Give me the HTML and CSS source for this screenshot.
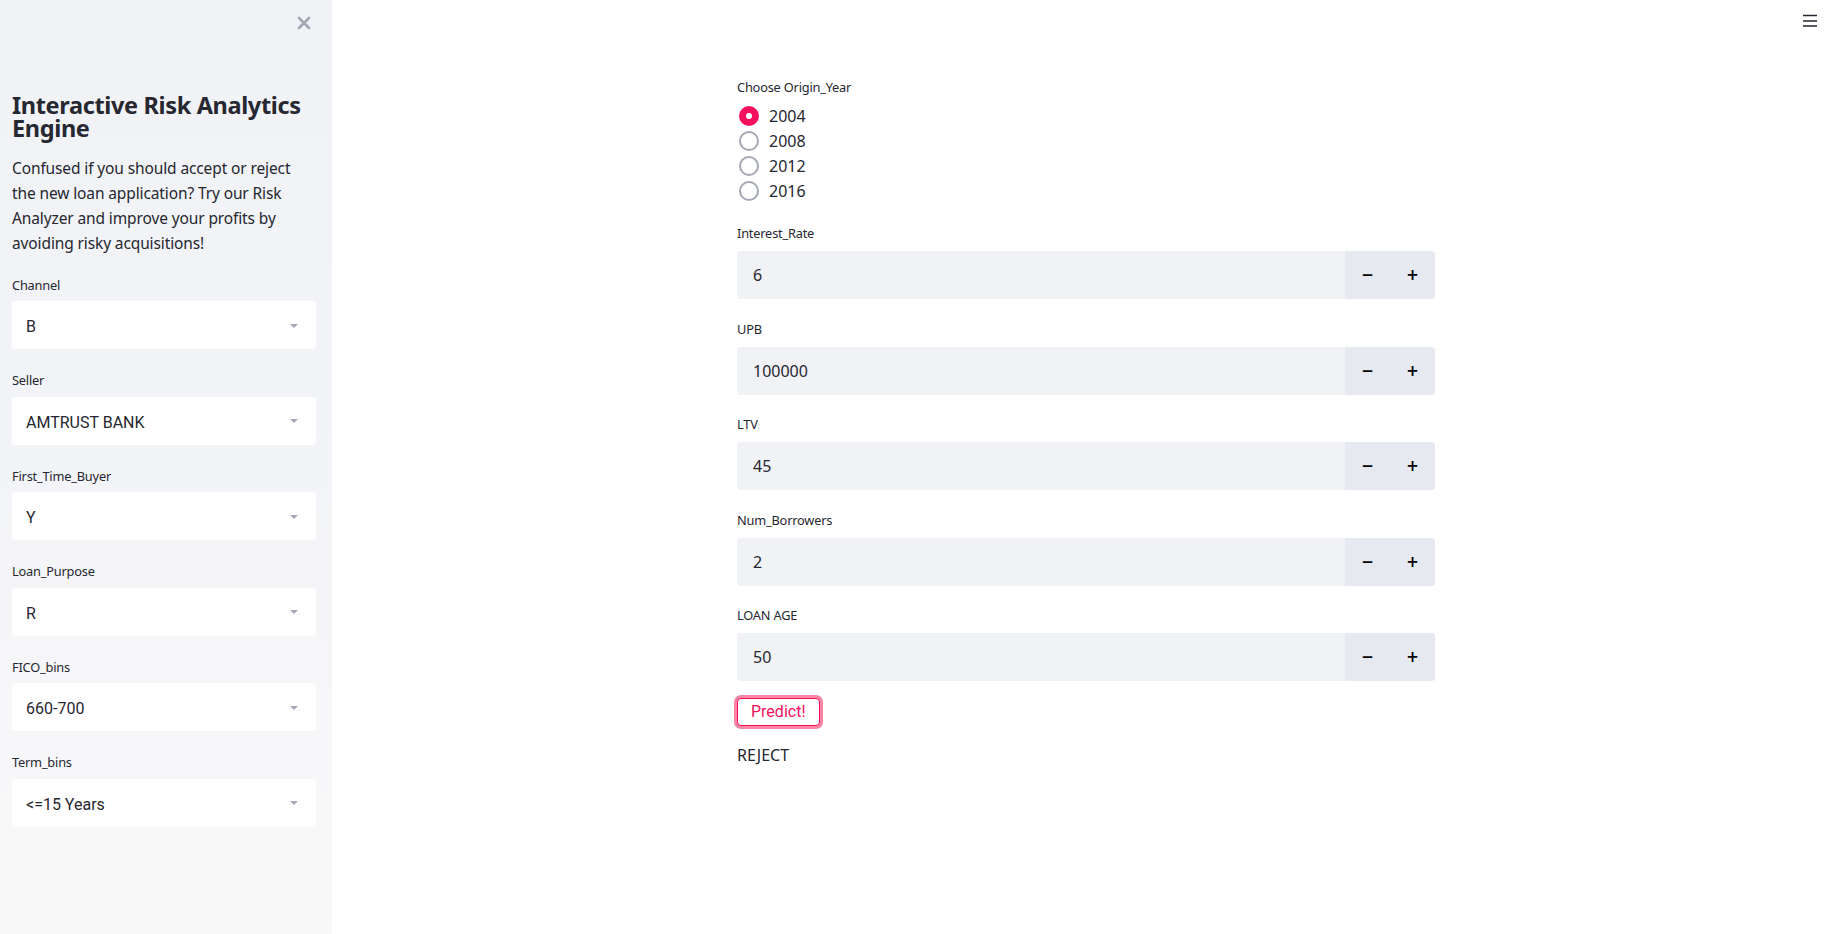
FILE: index.html
```html
<!DOCTYPE html>
<html lang="en">
<head>
<meta charset="utf-8">
<title>Interactive Risk Analytics Engine</title>
<link rel="stylesheet" href="styles.css">
</head>
<body>
<div class="app">
  <aside class="sidebar">
    <div class="sb-top">
      <svg class="close" width="14" height="14" viewBox="0 0 14 14"><path d="M2 2 L12 12 M12 2 L2 12" stroke="#a3a8b4" stroke-width="2.8" stroke-linecap="round"/></svg>
    </div>
    <h1 class="sb-title">Interactive Risk Analytics Engine</h1>
    <p class="sb-text">Confused if you should accept or reject the new loan application? Try our Risk Analyzer and improve your profits by avoiding risky acquisitions!</p>

    <div class="widget sb-widget">
      <div class="label">Channel</div>
      <div class="select"><span class="sel-val">B</span><span class="caret"></span></div>
    </div>
    <div class="widget sb-widget">
      <div class="label">Seller</div>
      <div class="select"><span class="sel-val">AMTRUST BANK</span><span class="caret"></span></div>
    </div>
    <div class="widget sb-widget">
      <div class="label">First_Time_Buyer</div>
      <div class="select"><span class="sel-val">Y</span><span class="caret"></span></div>
    </div>
    <div class="widget sb-widget">
      <div class="label">Loan_Purpose</div>
      <div class="select"><span class="sel-val">R</span><span class="caret"></span></div>
    </div>
    <div class="widget sb-widget">
      <div class="label">FICO_bins</div>
      <div class="select"><span class="sel-val">660-700</span><span class="caret"></span></div>
    </div>
    <div class="widget sb-widget">
      <div class="label">Term_bins</div>
      <div class="select"><span class="sel-val">&lt;=15 Years</span><span class="caret"></span></div>
    </div>
  </aside>

  <main class="main">
    <button class="menu" aria-label="menu">
      <svg width="16" height="14" viewBox="0 0 16 14"><path d="M1 2.5 H15 M1 8 H15 M1 13 H15" stroke="#262730" stroke-width="1.6"/></svg>
    </button>
    <div class="block">
      <div class="radio-widget">
        <div class="label">Choose Origin_Year</div>
        <div class="radios">
          <div class="radio-row"><span class="radio checked"></span><span>2004</span></div>
          <div class="radio-row"><span class="radio"></span><span>2008</span></div>
          <div class="radio-row"><span class="radio"></span><span>2012</span></div>
          <div class="radio-row"><span class="radio"></span><span>2016</span></div>
        </div>
      </div>

      <div class="widget num-widget">
        <div class="label">Interest_Rate</div>
        <div class="num"><span class="num-val">6</span><span class="step">&#8722;</span><span class="step plus">+</span></div>
      </div>
      <div class="widget num-widget">
        <div class="label">UPB</div>
        <div class="num"><span class="num-val">100000</span><span class="step">&#8722;</span><span class="step plus">+</span></div>
      </div>
      <div class="widget num-widget">
        <div class="label">LTV</div>
        <div class="num"><span class="num-val">45</span><span class="step">&#8722;</span><span class="step plus">+</span></div>
      </div>
      <div class="widget num-widget">
        <div class="label">Num_Borrowers</div>
        <div class="num"><span class="num-val">2</span><span class="step">&#8722;</span><span class="step plus">+</span></div>
      </div>
      <div class="widget num-widget">
        <div class="label">LOAN AGE</div>
        <div class="num"><span class="num-val">50</span><span class="step">&#8722;</span><span class="step plus">+</span></div>
      </div>

      <button class="btn">Predict!</button>
      <p class="result">REJECT</p>
    </div>
  </main>
</div>
</body>
</html>
```

FILE: styles.css
```css
* { box-sizing: border-box; }
html, body { margin: 0; padding: 0; }
body {
  font-family: "Noto Sans", "DejaVu Sans", sans-serif;
  color: #262730;
  background: #ffffff;
  width: 1835px;
  height: 934px;
  overflow: hidden;
}
.app {
  display: flex;
  height: 934px;
}
.sidebar {
  width: 332px;
  flex: 0 0 332px;
  height: 934px;
  padding: 0 16px 0 12px;
  background: linear-gradient(180deg, #f0f2f6 0%, #f3f4f7 50%, #f9f9fa 100%);
}
.sb-top {
  height: 46px;
  display: flex;
  justify-content: flex-end;
  align-items: center;
  padding-right: 5px;
}
.close { display: block; }
.sb-title {
  margin: 48px 0 0 0;
  font-size: 23.5px;
  line-height: 23px;
  font-weight: 700;
  letter-spacing: -0.35px;
}
.sb-text {
  margin: 16px 0 0 0;
  font-size: 15.5px;
  line-height: 25px;
  letter-spacing: -0.12px;
}
.label {
  font-size: 12.8px;
  line-height: 16px;
  height: 16px;
  letter-spacing: -0.2px;
}
.widget .label { margin-bottom: 8.5px; }
.sb-widget { margin-top: 23px; }
.sb-text + .sb-widget { margin-top: 20.5px; }
.select {
  height: 48px;
  background: #ffffff;
  border-radius: 4px;
  display: flex;
  align-items: center;
  padding: 3px 18px 0 14px;
}
.sel-val {
  flex: 1;
  font-family: Roboto, "Liberation Sans", sans-serif;
  font-size: 16px;
}
.caret {
  width: 0;
  height: 0;
  border-left: 4px solid transparent;
  border-right: 4px solid transparent;
  border-top: 4px solid #a3a8b4;
  margin-top: -2px;
}

.main {
  flex: 1;
  position: relative;
  display: flex;
  justify-content: center;
  padding-left: 5px;
}
.menu {
  position: absolute;
  top: 12px;
  right: 17px;
  border: 0;
  background: transparent;
  padding: 0;
  width: 16px;
  height: 16px;
  cursor: pointer;
}
.menu svg { display: block; }
.block {
  width: 698px;
  padding-top: 78.5px;
}
.radios { margin-top: 9px; }
.radio-row {
  display: flex;
  align-items: center;
  height: 25px;
  font-size: 16px;
}
.radio {
  width: 20px;
  height: 20px;
  border-radius: 50%;
  border: 2px solid #a3a8b4;
  background: #fff;
  margin: 0 10px 0 2px;
  flex: 0 0 20px;
}
.radio.checked {
  background: #f5105e;
  border: 0;
  position: relative;
}
.radio.checked::after {
  content: "";
  position: absolute;
  left: 7px;
  top: 7px;
  width: 6px;
  height: 6px;
  border-radius: 50%;
  background: #fff;
}
.num-widget .label { margin-bottom: 10px; }
.radio-widget + .num-widget { margin-top: 21.5px; }
.num-widget + .num-widget { margin-top: 21.5px; }
.num {
  height: 48px;
  display: flex;
  border-radius: 4px;
  overflow: hidden;
  background: #f0f2f6;
}
.num-val {
  flex: 1;
  display: flex;
  align-items: center;
  padding-left: 16px;
  font-size: 16px;
}
.step {
  width: 45px;
  background: #e6e9f0;
  display: flex;
  align-items: center;
  justify-content: center;
  font-family: "DejaVu Sans", sans-serif;
  font-weight: 700;
  font-size: 15px;
  color: #000;
}
.btn {
  display: block;
  margin-top: 16.5px;
  height: 28px;
  padding: 0 13px;
  border: 1px solid #f5105e;
  border-radius: 4px;
  background: #fff;
  color: #f5105e;
  font-family: Roboto, "Liberation Sans", sans-serif;
  font-size: 16px;
  box-shadow: 0 0 0 3px rgba(246, 51, 102, 0.6);
}
.result {
  margin: 17px 0 0 0;
  font-size: 16px;
  line-height: 25.6px;
}
```
